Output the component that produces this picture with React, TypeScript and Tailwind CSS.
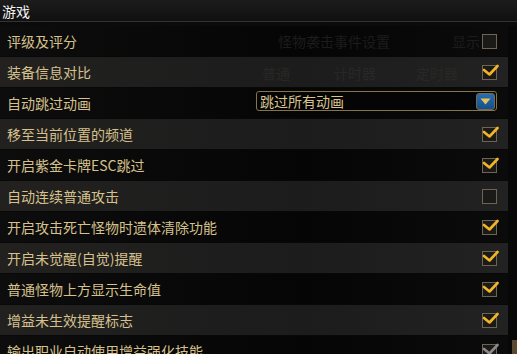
import React from "react";

const FONT = { fontFamily: '"Noto Sans CJK SC", "Noto Sans", sans-serif' };

type Row = { label: string; state: "on" | "off" | "dropdown" | "gray" };

const rows: Row[] = [
  { label: "评级及评分", state: "off" },
  { label: "装备信息对比", state: "on" },
  { label: "自动跳过动画", state: "dropdown" },
  { label: "移至当前位置的频道", state: "on" },
  { label: "开启紫金卡牌ESC跳过", state: "on" },
  { label: "自动连续普通攻击", state: "off" },
  { label: "开启攻击死亡怪物时遗体清除功能", state: "on" },
  { label: "开启未觉醒(自觉)提醒", state: "on" },
  { label: "普通怪物上方显示生命值", state: "on" },
  { label: "增益未生效提醒标志", state: "on" },
  { label: "输出职业自动使用增益强化技能", state: "gray" },
];

function Check({ state }: { state: "on" | "off" | "gray" }) {
  return (
    <div className="relative w-[15px] h-[15px] border border-[#6e6452] bg-[#1b1a18] shrink-0">
      {state !== "off" && (
        <svg
          className="absolute left-[-1px] top-[-3px]"
          width="17"
          height="15"
          viewBox="0 0 17 15"
        >
          <path
            d="M2 7 L7.5 11.5 L15.5 3"
            fill="none"
            stroke={state === "on" ? "#f2b526" : "#8a8a8a"}
            strokeWidth="2.6"
            strokeLinecap="round"
            strokeLinejoin="round"
          />
        </svg>
      )}
    </div>
  );
}

function Dropdown() {
  return (
    <div className="ml-auto w-[241px] h-[20px] rounded-[3px] border border-[#85744c] bg-[#050505] flex items-center pl-[3px] pr-[1px] mt-[-4px]">
      <span className="text-[14px] leading-none text-[#d8c38e]">跳过所有动画</span>
      <div className="ml-auto w-[19px] h-[17px] rounded-[3px] border border-[#7a6a44] bg-[linear-gradient(#2a6db0,#134f8e)] flex items-center justify-center">
        <svg width="11" height="7" viewBox="0 0 11 7">
          <path d="M0.5 0.5 H10.5 L5.5 6.5 Z" fill="#e9c25a" />
        </svg>
      </div>
    </div>
  );
}

export default function App() {
  return (
    <div
      className="relative w-[517px] h-[354px] overflow-hidden bg-[#080808]"
      style={FONT}
    >
      <div className="h-[21px] bg-[linear-gradient(#1c1c1c,#101010)] flex items-center pl-[2px]">
        <span className="text-[14px] leading-none text-[#f2f2f2]">游戏</span>
      </div>
      <div className="h-[1px] bg-[#333333]" />
      <div className="h-[4px] bg-[#0b0b0b]" />
      <div className="flex flex-col gap-[1px] w-[508px]">
        {rows.map((r, i) => (
          <div
            key={r.label}
            className={
              "relative h-[30px] flex items-center pl-[7px] pr-[11px] " +
              (i % 2 === 1
                ? "bg-[linear-gradient(90deg,#222120,#1c1c1c_60%,#222222)]"
                : "bg-[linear-gradient(90deg,#0d0d0d,#050505_60%,#0b0b0b)]")
            }
          >
            <span className="text-[14px] leading-none text-[#d6c18d] whitespace-nowrap">
              {r.label}
            </span>
            {i === 0 && (
              <span className="absolute left-[278px] top-[8px] text-[14px] leading-none text-[#1c1c1c]">
                怪物袭击事件设置
                <span className="ml-[62px]">显示</span>
              </span>
            )}
            {i === 1 && (
              <span className="absolute left-[262px] top-[9px] text-[14px] leading-none text-[#292826]">
                普通
                <span className="ml-[44px]">计时器</span>
                <span className="ml-[40px]">定时器</span>
              </span>
            )}
            {r.state === "dropdown" ? (
              <Dropdown />
            ) : (
              <div className="ml-auto">
                <Check state={r.state} />
              </div>
            )}
          </div>
        ))}
      </div>
      <div className="absolute right-0 top-[340px] w-[5px] h-[14px] bg-[#5a4a30]" />
    </div>
  );
}
